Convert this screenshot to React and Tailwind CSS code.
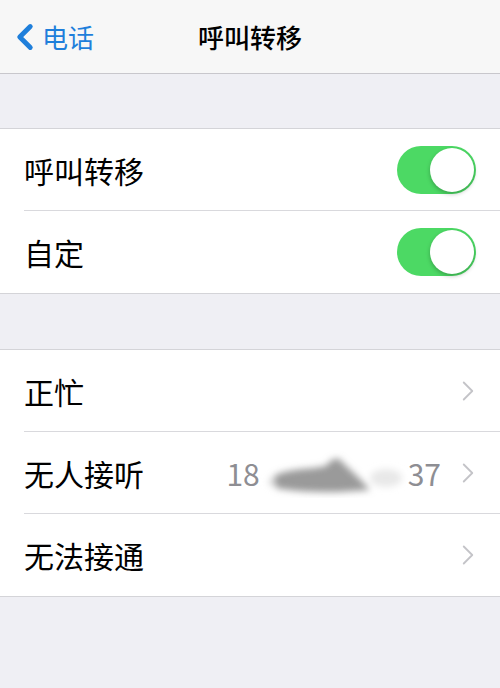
import { ChevronLeft, ChevronRight } from "lucide-react";

const font = { fontFamily: '"Noto Sans CJK SC", "Noto Sans", sans-serif' };

const Toggle = () => (
  <div className="relative w-[79px] h-[48px] rounded-full bg-[#4cd964]">
    <div className="absolute right-[2px] top-[2px] w-[44px] h-[44px] rounded-full bg-white shadow-[0_2px_4px_rgba(0,0,0,0.25)]" />
  </div>
);

const Row = ({ label, right, last }) => (
  <div className="flex items-stretch pl-6 bg-white">
    <div
      className={`flex-1 flex items-center h-[82px] pr-6 ${
        last ? "" : "border-b border-[#d9d9dd]"
      }`}
    >
      <span className="text-[30px] text-black leading-none">{label}</span>
      <div className="ml-auto flex items-center">{right}</div>
    </div>
  </div>
);

const Chevron = () => (
  <ChevronRight size={34} strokeWidth={1.3} className="text-[#c4c4c8] mr-[-9px]" />
);

const Smudge = () => (
  <svg width="148" height="50" viewBox="0 0 148 50">
    <defs>
      <filter id="b" x="-20%" y="-40%" width="140%" height="180%">
        <feGaussianBlur stdDeviation="3.5" />
      </filter>
    </defs>
    <g filter="url(#b)">
      <ellipse cx="22" cy="34" rx="14" ry="5" fill="#d8d8d8" />
      <path d="M14 28 C28 20 48 22 66 18 C72 10 78 8 82 14 C90 22 100 30 110 42 L78 44 C58 44 36 44 16 40 Z" fill="#9a9a9a" />
      <ellipse cx="126" cy="30" rx="16" ry="9" fill="#e8e8e8" />
    </g>
  </svg>
);

export default function App() {
  return (
    <div className="w-[500px] h-[688px] bg-[#efeff4] overflow-hidden" style={font}>
      <div className="relative h-[74px] bg-[#f7f7f7] border-b border-[#c8c7cc] flex items-center">
        <div className="flex items-center pl-[4px] text-[#1f7fdb]">
          <ChevronLeft size={42} strokeWidth={2.8} />
          <span className="text-[26px] ml-[-4px]">电话</span>
        </div>
        <div className="absolute inset-0 flex items-center justify-center pointer-events-none">
          <span className="text-[26px] font-medium text-black">呼叫转移</span>
        </div>
      </div>

      <div className="h-[54px]" />

      <div className="border-y border-[#d4d4d8]">
        <Row label="呼叫转移" right={<Toggle />} />
        <Row label="自定" right={<Toggle />} last />
      </div>

      <div className="h-[55px]" />

      <div className="border-y border-[#d4d4d8]">
        <Row label="正忙" right={<Chevron />} />
        <Row
          label="无人接听"
          right={
            <div className="flex items-center text-[30px] text-[#8e8e93] leading-none">
              <span>18</span>
              <Smudge />
              <span className="mr-[10px]">37</span>
              <Chevron />
            </div>
          }
        />
        <Row label="无法接通" right={<Chevron />} last />
      </div>
    </div>
  );
}
